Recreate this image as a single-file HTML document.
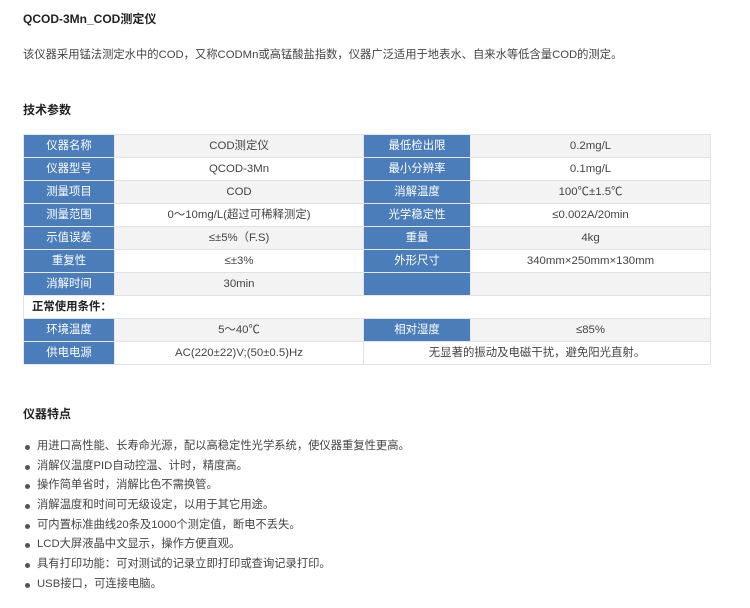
<!DOCTYPE html><html><head><meta charset="utf-8"><style>
body{margin:0;width:750px;height:608px;background:#fff;font-family:"Liberation Sans","Noto Sans CJK SC",sans-serif;color:#333;font-size:11.3px;position:relative}
.a{position:absolute;white-space:nowrap}
h{font-weight:bold;color:#222;font-size:12px}
table{position:absolute;left:23px;top:134px;width:687px;border-collapse:collapse;table-layout:fixed}
td{height:22px;line-height:22px;padding:0;border:1px solid #e2e2e2;text-align:center;font-size:11.4px;color:#444;vertical-align:middle}
td span{display:inline-block;line-height:14px;vertical-align:middle}
td.b{background:#4a7dba;color:#fff;border-color:#e8e8e8}
tr.g td.v{background:#f3f3f3}
.sec td{text-align:left;padding-left:8px;font-weight:bold;color:#222}
ul{position:absolute;left:23px;top:437px;margin:0;padding:0;list-style:none}
li{height:19.7px;line-height:19.7px;font-size:11.3px;color:#444;padding-left:14px;position:relative}
li:before{content:"";position:absolute;left:2px;top:8px;width:5px;height:5px;border-radius:50%;background:#555}
</style></head><body>
<div class="a" style="left:23px;top:10px"><h>QCOD-3Mn_COD测定仪</h></div>
<div class="a" style="left:23px;top:46px;color:#444">该仪器采用锰法测定水中的COD，又称CODMn或高锰酸盐指数，仪器广泛适用于地表水、自来水等低含量COD的测定。</div>
<div class="a" style="left:23px;top:101px"><h>技术参数</h></div>
<table>
<colgroup><col style="width:91px"><col style="width:249px"><col style="width:107px"><col style="width:240px"></colgroup>
<tr class="g"><td class="b"><span>仪器名称</span></td><td class="v"><span>COD测定仪</span></td><td class="b"><span>最低检出限</span></td><td class="v"><span>0.2mg/L</span></td></tr>
<tr><td class="b"><span>仪器型号</span></td><td class="v"><span>QCOD-3Mn</span></td><td class="b"><span>最小分辨率</span></td><td class="v"><span>0.1mg/L</span></td></tr>
<tr class="g"><td class="b"><span>测量项目</span></td><td class="v"><span>COD</span></td><td class="b"><span>消解温度</span></td><td class="v"><span>100℃±1.5℃</span></td></tr>
<tr><td class="b"><span>测量范围</span></td><td class="v"><span>0～10mg/L(超过可稀释测定)</span></td><td class="b"><span>光学稳定性</span></td><td class="v"><span>≤0.002A/20min</span></td></tr>
<tr class="g"><td class="b"><span>示值误差</span></td><td class="v"><span>≤±5%（F.S)</span></td><td class="b"><span>重量</span></td><td class="v"><span>4kg</span></td></tr>
<tr><td class="b"><span>重复性</span></td><td class="v"><span>≤±3%</span></td><td class="b"><span>外形尺寸</span></td><td class="v"><span>340mm×250mm×130mm</span></td></tr>
<tr class="g"><td class="b"><span>消解时间</span></td><td class="v"><span>30min</span></td><td class="b"></td><td class="v"></td></tr>
<tr class="sec"><td colspan="4"><span>正常使用条件：</span></td></tr>
<tr class="g"><td class="b"><span>环境温度</span></td><td class="v"><span>5～40℃</span></td><td class="b"><span>相对湿度</span></td><td class="v"><span>≤85%</span></td></tr>
<tr><td class="b"><span>供电电源</span></td><td class="v"><span>AC(220±22)V;(50±0.5)Hz</span></td><td colspan="2"><span>无显著的振动及电磁干扰，避免阳光直射。</span></td></tr>
</table>
<div class="a" style="left:23px;top:405px"><h>仪器特点</h></div>
<ul>
<li>用进口高性能、长寿命光源，配以高稳定性光学系统，使仪器重复性更高。</li>
<li>消解仪温度PID自动控温、计时，精度高。</li>
<li>操作简单省时，消解比色不需换管。</li>
<li>消解温度和时间可无级设定，以用于其它用途。</li>
<li>可内置标准曲线20条及1000个测定值，断电不丢失。</li>
<li>LCD大屏液晶中文显示，操作方便直观。</li>
<li>具有打印功能：可对测试的记录立即打印或查询记录打印。</li>
<li>USB接口，可连接电脑。</li>
</ul>
</body></html>
